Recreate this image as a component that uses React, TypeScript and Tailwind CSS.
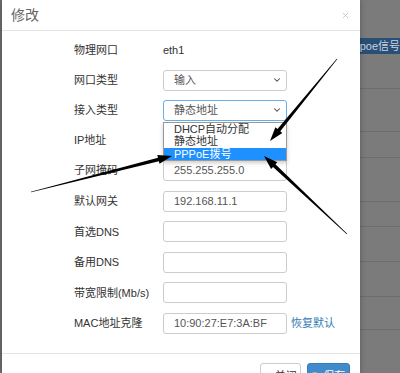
import React from "react";
import { ChevronDown, X, Save } from "lucide-react";

const font = { fontFamily: '"Liberation Sans", "Noto Sans CJK SC", sans-serif' };

function arrowPoints(tx: number, ty: number, px: number, py: number) {
  const dx = px - tx;
  const dy = py - ty;
  const len = Math.hypot(dx, dy);
  const ux = dx / len;
  const uy = dy / len;
  const nx = -uy;
  const ny = ux;
  const headLen = 14;
  const bx = px - ux * headLen;
  const by = py - uy * headLen;
  const pts: [number, number][] = [
    [tx + nx * 0.3, ty + ny * 0.3],
    [bx + nx * 1.8, by + ny * 1.8],
    [bx + nx * 4.5, by + ny * 4.5],
    [px, py],
    [bx - nx * 4.5, by - ny * 4.5],
    [bx - nx * 1.8, by - ny * 1.8],
    [tx - nx * 0.3, ty - ny * 0.3],
  ];
  return pts.map((p) => `${p[0].toFixed(1)},${p[1].toFixed(1)}`).join(" ");
}

function Row({
  label,
  h,
  children,
}: {
  label: string;
  h: string;
  children?: React.ReactNode;
}) {
  return (
    <div className={`shrink-0 flex items-center pl-[72px] ${h}`}>
      <div className="w-[89px] text-[11px] text-[#333]">{label}</div>
      {children}
    </div>
  );
}

function Input({ value }: { value?: string }) {
  return (
    <div className="w-[124px] h-[21px] border border-[#ccc] rounded-[3px] flex items-center pl-[10px] text-[11px] text-[#555] bg-white">
      {value}
    </div>
  );
}

function Select({ value, focus }: { value: string; focus?: boolean }) {
  return (
    <div
      className={`w-[124px] h-[21px] border rounded-[3px] flex items-center justify-between pl-[10px] pr-[4px] text-[11px] text-[#555] bg-white ${
        focus ? "border-[#66afe9]" : "border-[#ccc]"
      }`}
    >
      <span>{value}</span>
      <ChevronDown size={10} strokeWidth={2.5} color="#444" />
    </div>
  );
}

export default function App() {
  return (
    <div
      className="relative w-[400px] h-[373px] overflow-hidden flex bg-[#7b7b7b]"
      style={font}
    >
      <div className="w-[2px] h-full bg-[#6f6f6f]" />
      <div className="w-[370px] h-full overflow-hidden bg-white flex flex-col shadow-[0_0_6px_rgba(0,0,0,0.3)] relative z-10">
        <div className="shrink-0 h-[31px] border-b border-[#e5e5e5] flex items-center justify-between pl-[9px] pr-[10px]">
          <span className="text-[14px] text-[#666]">修改</span>
          <X size={9} strokeWidth={2} color="#bbb" />
        </div>
        <div className="shrink-0 pt-[4px] flex flex-col">
          <Row label="物理网口" h="h-[30px]">
            <span className="text-[11px] text-[#333]">eth1</span>
          </Row>
          <Row label="网口类型" h="h-[30px]">
            <Select value="输入" />
          </Row>
          <Row label="接入类型" h="h-[30px]">
            <div className="relative z-20">
              <Select value="静态地址" focus />
              <div className="absolute left-0 top-[22px] w-[124px] bg-white border border-[#999] shadow-[0_2px_4px_rgba(0,0,0,0.2)] text-[11px] text-[#333] flex flex-col">
                <div className="h-[12.5px] leading-[12.5px] pl-[10px]">DHCP自动分配</div>
                <div className="h-[12.5px] leading-[12.5px] pl-[10px]">静态地址</div>
                <div className="h-[12.5px] leading-[12.5px] pl-[10px] bg-[#1e90ff] text-white">PPPoE拨号</div>
              </div>
            </div>
          </Row>
          <Row label="IP地址" h="h-[30px]">
            <Input />
          </Row>
          <Row label="子网掩码" h="h-[31px]">
            <Input value="255.255.255.0" />
          </Row>
          <Row label="默认网关" h="h-[30.5px]">
            <Input value="192.168.11.1" />
          </Row>
          <Row label="首选DNS" h="h-[30.5px]">
            <Input />
          </Row>
          <Row label="备用DNS" h="h-[30.5px]">
            <Input />
          </Row>
          <Row label="带宽限制(Mb/s)" h="h-[30.5px]">
            <Input />
          </Row>
          <Row label="MAC地址克隆" h="h-[30.5px]">
            <Input value="10:90:27:E7:3A:BF" />
            <span className="ml-[4px] text-[11px] text-[#337ab7]">恢复默认</span>
          </Row>
        </div>
        <div className="shrink-0 mt-[14.5px] border-t border-[#e5e5e5] flex justify-end gap-[6px] pt-[9px] pr-[10px]">
          <div className="shrink-0 w-[41px] h-[26px] border border-[#ccc] rounded-[3px] bg-white flex items-center justify-center gap-[3px] text-[11px] text-[#333]">
            <X size={8} strokeWidth={3} color="#333" />
            <span>关闭</span>
          </div>
          <div className="shrink-0 w-[43px] h-[26px] border border-[#357ebd] rounded-[3px] bg-[#428bca] flex items-center justify-center gap-[3px] text-[11px] text-white">
            <Save size={9} strokeWidth={2.5} color="#fff" />
            <span>保存</span>
          </div>
        </div>
      </div>
      <div className="flex-1 flex flex-col">
        <div className="shrink-0 h-[38px]" />
        <div className="shrink-0 h-[16px] bg-[#2a4f76] text-[11px] text-[#c8d4e0] whitespace-nowrap overflow-hidden leading-[16px]">
          poe信号
        </div>
        <div className="shrink-0 h-[35px] border-b border-[#6e6e6e]" />
        <div className="shrink-0 h-[43px] border-b border-[#6e6e6e]" />
        <div className="shrink-0 h-[26px] border-b border-[#6e6e6e]" />
        <div className="shrink-0 h-[44px] border-b border-[#6e6e6e]" />
        <div className="shrink-0 h-[25px] border-b border-[#6e6e6e]" />
        <div className="shrink-0 h-[35px] border-b border-[#6e6e6e]" />
        <div className="shrink-0 h-[35px] border-b border-[#6e6e6e]" />
        <div className="shrink-0 h-[33px] border-b border-[#6e6e6e]" />
      </div>
      <svg
        className="absolute inset-0 z-30 pointer-events-none"
        width={400}
        height={373}
        viewBox="0 0 400 373"
      >
        <polygon points={arrowPoints(31, 192, 172, 156)} fill="#000" />
        <polygon points={arrowPoints(337, 59, 270, 141)} fill="#000" />
        <polygon points={arrowPoints(347, 234, 264, 156)} fill="#000" />
      </svg>
    </div>
  );
}
